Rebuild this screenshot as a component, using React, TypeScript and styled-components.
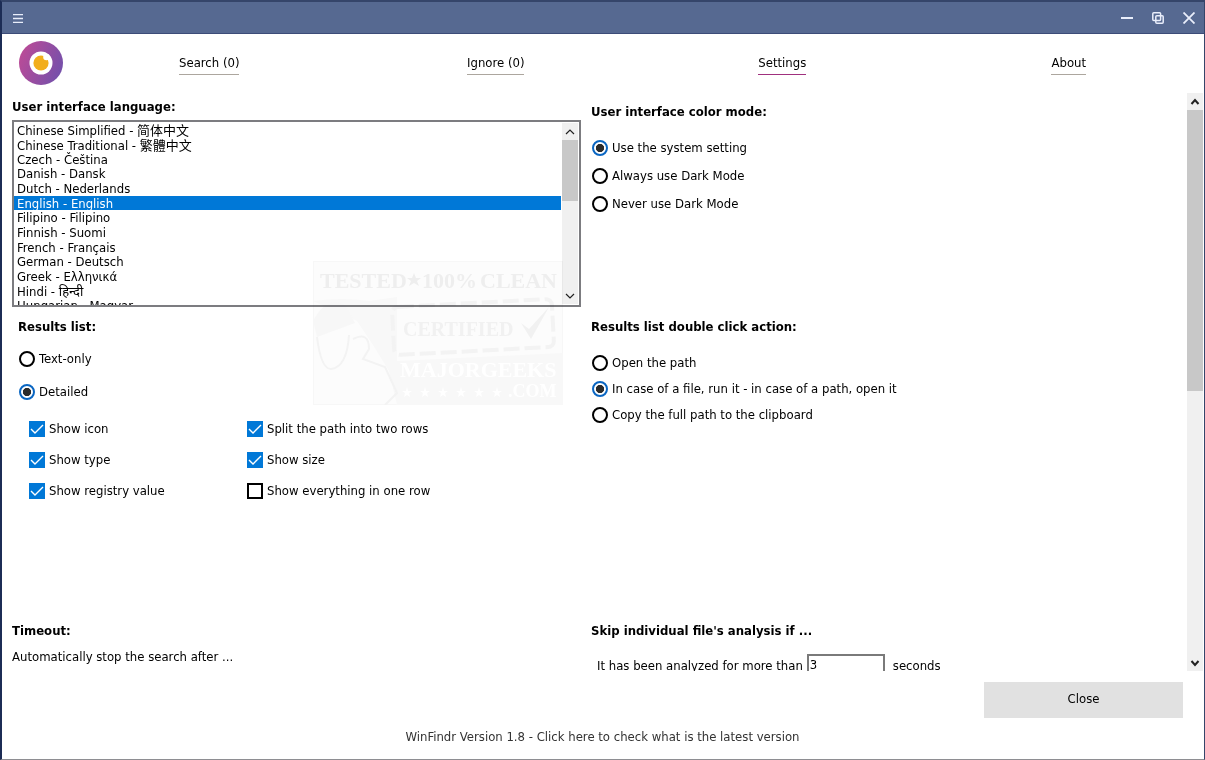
import React, { useState } from "react";
import styled, { createGlobalStyle, css } from "styled-components";

const ink = "#000";
const accent = "#0078d7";

const GlobalStyle = createGlobalStyle`
  *, *::before, *::after { box-sizing: border-box; }
  body {
    margin: 0;
    background: #fff;
  }
  body, button, input, select {
    font-family: "DejaVu Sans Condensed", "Noto Sans", "Noto Sans CJK SC", sans-serif;
    font-size: 13px;
    line-height: 16px;
    color: ${ink};
  }
`;

const Window = styled.div`
  display: flex;
  flex-direction: column;
  height: 100vh;
  border: 2px solid #35456a;
  border-left-color: #1c2c55;
  border-right-width: 1px;
  border-bottom: 1px solid #8e8e92;
  overflow: hidden;
`;

const TitleBar = styled.div`
  display: flex;
  justify-content: space-between;
  flex: none;
  height: 32px;
  padding: 1px 7px 0 8px;
  background: #566991;
  border-bottom: 1px solid #3c4c78;
`;

const WindowButtons = styled.div`
  display: flex;
  gap: 15px;
`;

const TitleButton = styled.button`
  display: flex;
  align-items: center;
  justify-content: center;
  width: 16px;
  padding: 0;
  border: 0;
  background: none;
  color: #e9eefb;
`;

const Header = styled.header`
  display: flex;
  align-items: center;
  flex: none;
  height: 59px;
  padding: 0 0 2px 17px;
`;

const Nav = styled.nav`
  display: grid;
  grid-template-columns: repeat(4, 1fr);
  flex: 1;
  justify-items: center;
  margin: 4px -8px 0 3px;
`;

const NavLink = styled.a<{ $active?: boolean }>`
  padding-bottom: 3px;
  border-bottom: 1px solid ${(p) => (p.$active ? "#a0307e" : "#aca69e")};
  color: ${ink};
  text-decoration: none;
`;

const ScrollArea = styled.main`
  display: flex;
  flex: 1;
  min-height: 0;
  padding-right: 1px;
`;

const SettingsGrid = styled.div`
  display: grid;
  grid-template-columns: 1fr 1fr;
  grid-template-rows: minmax(226px, auto) minmax(304px, auto) auto;
  column-gap: 10px;
  align-content: start;
  flex: 1;
  padding: 0 27px 0 10px;
  overflow: hidden;
`;

const Section = styled.section<{ $top: number; $inset?: number }>`
  min-width: 0;
  padding-top: ${(p) => p.$top}px;
  padding-left: ${(p) => p.$inset ?? 0}px;
`;

const Heading = styled.h2`
  display: block;
  margin: 0;
  font-size: 13px;
  line-height: 16px;
  font-weight: bold;
`;

const ListFrame = styled.div`
  position: relative;
  display: flex;
  height: 187px;
  margin-top: 5px;
  border: 2px solid #7c7c80;
`;

const LanguageList = styled.select`
  appearance: none;
  flex: 1;
  min-width: 0;
  height: 183px;
  padding: 0;
  border: 0;
  outline: 0;
  overflow: hidden;
  background: #fff;

  option {
    display: flex;
    align-items: center;
    height: 15px;
    min-height: 0;
    padding: 0 3px;
    white-space: nowrap;
  }
  option:nth-child(3n) {
    height: 14px;
  }
  option:checked {
    background: ${accent} linear-gradient(${accent}, ${accent});
    color: #fff;
    -webkit-text-fill-color: #fff;
  }
`;

const Bar = styled.div<{ $inner?: boolean }>`
  display: flex;
  flex-direction: column;
  flex: none;
  width: 16px;
  background: #f0f0f0;
  ${(p) =>
    p.$inner &&
    css`
      margin: 1px;
    `}
`;

const BarButton = styled.button`
  display: flex;
  align-items: center;
  justify-content: center;
  flex: none;
  height: 17px;
  padding: 0;
  border: 0;
  background: none;
  color: #222;
`;

const Thumb = styled.div<{ $share: number }>`
  flex: ${(p) => p.$share} 0 0;
  background: #c8c8c8;
`;

const Track = styled.div<{ $share: number }>`
  flex: ${(p) => p.$share} 0 0;
`;

const Watermark = styled.svg`
  position: absolute;
  right: 16px;
  top: 139px;
  width: 250px;
  height: 144px;
  mix-blend-mode: multiply;
  pointer-events: none;
  font-family: "Liberation Serif", serif;
  font-weight: bold;
`;

const Options = styled.div<{ $gap: number; $top: number }>`
  display: flex;
  flex-direction: column;
  align-items: flex-start;
  gap: ${(p) => p.$gap}px;
  padding: ${(p) => p.$top}px 0 0 1px;
`;

const CheckGrid = styled.div`
  display: grid;
  grid-template-columns: 218px auto;
  justify-content: start;
  gap: 15px 0;
  padding: 21px 0 0 11px;
`;

const Choice = styled.label`
  display: flex;
  align-items: center;
  gap: 4px;
`;

const RadioInput = styled.input`
  appearance: none;
  width: 16px;
  height: 16px;
  margin: 0;
  padding: 2px;
  border: 2px solid ${ink};
  border-radius: 50%;
  background-clip: content-box;

  &:checked {
    border-color: #0a66c2;
    background-color: #2b2b2b;
    background-image: radial-gradient(circle, #2b2b2b 4px, #fff 4px);
  }
`;

const CheckWrap = styled.span`
  display: grid;

  > * {
    grid-area: 1 / 1;
  }
  > svg {
    pointer-events: none;
  }
`;

const CheckInput = styled.input`
  appearance: none;
  width: 16px;
  height: 16px;
  margin: 0;
  border: 2px solid ${ink};
  background: #fff;

  &:checked {
    border-color: ${accent};
    background: ${accent};
  }
`;

const Note = styled.p`
  margin: 10px 0 0;
`;

const SecondsRow = styled.div`
  display: flex;
  align-items: flex-start;
  gap: 4px;
  padding: 15px 0 0 6px;
`;

const SecondsText = styled.label`
  padding-top: 4px;
`;

const SecondsInput = styled.input`
  width: 78px;
  height: 23px;
  margin-right: 4px;
  padding: 0 0 2px 1px;
  border: 2px solid #7a7a7a;
  outline: 0;
  background: #fff;
`;

const Footer = styled.footer`
  display: flex;
  flex-direction: column;
  align-items: center;
  flex: none;
  gap: 11px;
  padding: 11px 21px 14px 20px;
`;

const CloseButton = styled.button`
  align-self: flex-end;
  width: 199px;
  height: 36px;
  padding: 0 0 2px;
  border: 0;
  background: #e1e1e1;
`;

const VersionLink = styled.a`
  color: #333;
  text-decoration: none;
`;

const languages = [
  "Chinese Simplified - 简体中文",
  "Chinese Traditional - 繁體中文",
  "Czech - Čeština",
  "Danish - Dansk",
  "Dutch - Nederlands",
  "English - English",
  "Filipino - Filipino",
  "Finnish - Suomi",
  "French - Français",
  "German - Deutsch",
  "Greek - Ελληνικά",
  "Hindi - हिन्दी",
  "Hungarian - Magyar",
];

function Scrollbar({ thumb, rest, inner }: { thumb: number; rest: number; inner?: boolean }) {
  const weight = inner ? 1.2 : 2;
  const reach = inner ? 4 : 3.5;
  const chevron = (dir: number) => (
    <svg width="12" height="8" viewBox="-6 -4 12 8" fill="none" stroke="currentColor" strokeWidth={weight}>
      <path d={`M${-reach} ${2 * dir}L0 ${-2 * dir}L${reach} ${2 * dir}`} />
    </svg>
  );
  return (
    <Bar $inner={inner}>
      <BarButton type="button" aria-label="Scroll up">{chevron(1)}</BarButton>
      <Thumb $share={thumb} />
      <Track $share={rest} />
      <BarButton type="button" aria-label="Scroll down">{chevron(-1)}</BarButton>
    </Bar>
  );
}

function RadioGroup({ name, options, initial, gap, top }: {
  name: string; options: string[]; initial: number; gap: number; top: number;
}) {
  const [value, setValue] = useState(initial);
  return (
    <Options $gap={gap} $top={top} role="radiogroup">
      {options.map((text, i) => (
        <Choice key={text}>
          <RadioInput type="radio" name={name} checked={value === i} onChange={() => setValue(i)} />
          {text}
        </Choice>
      ))}
    </Options>
  );
}

function Check({ text, initial }: { text: string; initial: boolean }) {
  const [on, setOn] = useState(initial);
  return (
    <Choice>
      <CheckWrap>
        <CheckInput type="checkbox" checked={on} onChange={() => setOn(!on)} />
        {on && (
          <svg width="16" height="16" viewBox="0 0 16 16" fill="none" stroke="#fff" strokeWidth="1.4">
            <path d="M2 8L6 12L14 4" />
          </svg>
        )}
      </CheckWrap>
      {text}
    </Choice>
  );
}

function Logo() {
  return (
    <svg width="44" height="44" viewBox="0 0 44 44" aria-label="WinFindr">
      <defs>
        <linearGradient id="ring" x1="0" y1="0.3" x2="1" y2="0.7">
          <stop offset="0" stopColor="#bb4b97" />
          <stop offset="1" stopColor="#7350ab" />
        </linearGradient>
      </defs>
      <circle cx="22" cy="22" r="22" fill="url(#ring)" />
      <circle cx="22" cy="22" r="11.5" fill="#fff" />
      <circle cx="22" cy="22" r="7.6" fill="#f2ae1c" />
      <circle cx="27.4" cy="16" r="3.2" fill="#fff" />
    </svg>
  );
}

function Stamp() {
  return (
    <Watermark viewBox="0 0 250 144" aria-hidden="true">
      <rect x="0.5" y="0.5" width="249" height="143" fill="#fcfcfc" stroke="#f7f7f7" />
      <path d="M0 40Q30 36 56 40L84 36V100L250 92V144H84L76 110L60 84L44 60Z" fill="#f8f8f8" />
      <path d="M0 60Q14 34 32 44L42 62L4 76Z" fill="#f7f7f7" />
      <path d="M4 76Q8 108 18 108Q34 106 36 74M40 78Q56 70 56 88L50 98L72 106L84 132L72 144" fill="none" stroke="#f3f3f3" strokeWidth="2" />
      <text x="7" y="27" fontSize="22" fill="#eeeeee">TESTED</text>
      <path d="M101 12l2 5h5l-4 3 2 5-5-3-5 3 2-5-4-3h5z" fill="#eeeeee" />
      <text x="109" y="27" fontSize="22" fill="#eeeeee">100%</text>
      <text x="167" y="27" fontSize="22" fill="#eeeeee">CLEAN</text>
      <rect x="80" y="42" width="160" height="48" rx="6" fill="none" stroke="#f3f3f3" strokeWidth="4" strokeDasharray="16 5" transform="rotate(-3 160 66)" />
      <text x="90" y="75" fontSize="20" fill="#f1f1f1">CERTIFIED</text>
      <path d="M208 62l8 6l20 -22l-18 32z" fill="#f1f1f1" />
      <text x="87" y="116" fontSize="22" fill="#fff">MAJORGEEKS</text>
      <text x="195" y="136" fontSize="18" fill="#fff">.COM</text>
      {[94, 112, 130, 148, 166, 184].map((x) => (
        <path key={x} d={`M${x} 126l1 4h4l-3 2 1 4-3-2-3 2 1-4-3-2h4z`} fill="#fff" />
      ))}
    </Watermark>
  );
}

export default function App() {
  const [language, setLanguage] = useState("English - English");
  const [seconds, setSeconds] = useState("3");

  return (
    <Window>
      <GlobalStyle />
      <TitleBar>
        <TitleButton type="button" aria-label="Menu">
          <svg width="10" height="9" viewBox="0 0 10 9" stroke="currentColor" strokeWidth="1.3">
            <path d="M0 0.7H10M0 4.5H10M0 8.3H10" />
          </svg>
        </TitleButton>
        <WindowButtons>
          <TitleButton type="button" aria-label="Minimize">
            <svg width="12" height="2" viewBox="0 0 12 2">
              <path d="M0 1H12" stroke="currentColor" strokeWidth="2" />
            </svg>
          </TitleButton>
          <TitleButton type="button" aria-label="Restore">
            <svg width="12" height="12" viewBox="0 0 12 12" fill="none" stroke="currentColor" strokeWidth="1.5">
              <rect x="0.8" y="0.8" width="7.8" height="7.8" rx="1" />
              <rect x="3.8" y="3.8" width="7.4" height="7.4" rx="1" />
            </svg>
          </TitleButton>
          <TitleButton type="button" aria-label="Close window">
            <svg width="12" height="12" viewBox="0 0 12 12" stroke="currentColor" strokeWidth="1.8">
              <path d="M0.5 0.5L11.5 11.5M11.5 0.5L0.5 11.5" />
            </svg>
          </TitleButton>
        </WindowButtons>
      </TitleBar>

      <Header>
        <Logo />
        <Nav>
          <NavLink href="#search">Search (0)</NavLink>
          <NavLink href="#ignore">Ignore (0)</NavLink>
          <NavLink href="#settings" $active>Settings</NavLink>
          <NavLink href="#about">About</NavLink>
        </Nav>
      </Header>

      <ScrollArea>
        <SettingsGrid>
          <Section $top={6}>
            <Heading as="label" htmlFor="language">User interface language:</Heading>
            <ListFrame>
              <LanguageList
                id="language"
                size={12}
                value={language}
                onChange={(e) => setLanguage(e.target.value)}
              >
                {languages.map((l) => (
                  <option key={l}>{l}</option>
                ))}
              </LanguageList>
              <Scrollbar thumb={61} rest={86} inner />
              <Stamp />
            </ListFrame>
          </Section>
          <Section $top={11}>
            <Heading>User interface color mode:</Heading>
            <RadioGroup
              name="mode"
              options={["Use the system setting", "Always use Dark Mode", "Never use Dark Mode"]}
              initial={0}
              gap={12}
              top={20}
            />
          </Section>

          <Section $top={0} $inset={6}>
            <Heading>Results list:</Heading>
            <RadioGroup name="results" options={["Text-only", "Detailed"]} initial={1} gap={17} top={16} />
            <CheckGrid>
              <Check text="Show icon" initial />
              <Check text="Split the path into two rows" initial />
              <Check text="Show type" initial />
              <Check text="Show size" initial />
              <Check text="Show registry value" initial />
              <Check text="Show everything in one row" initial={false} />
            </CheckGrid>
          </Section>
          <Section $top={0}>
            <Heading>Results list double click action:</Heading>
            <RadioGroup
              name="action"
              options={[
                "Open the path",
                "In case of a file, run it - in case of a path, open it",
                "Copy the full path to the clipboard",
              ]}
              initial={1}
              gap={10}
              top={20}
            />
          </Section>

          <Section $top={0}>
            <Heading>Timeout:</Heading>
            <Note>Automatically stop the search after ...</Note>
          </Section>
          <Section $top={0}>
            <Heading>Skip individual file's analysis if ...</Heading>
            <SecondsRow>
              <SecondsText htmlFor="seconds">It has been analyzed for more than</SecondsText>
              <SecondsInput id="seconds" value={seconds} onChange={(e) => setSeconds(e.target.value)} />
              <SecondsText htmlFor="seconds">seconds</SecondsText>
            </SecondsRow>
          </Section>
        </SettingsGrid>
        <Scrollbar thumb={281} rest={263} />
      </ScrollArea>

      <Footer>
        <CloseButton type="button">Close</CloseButton>
        <VersionLink href="#version">
          WinFindr Version 1.8 - Click here to check what is the latest version
        </VersionLink>
      </Footer>
    </Window>
  );
}
